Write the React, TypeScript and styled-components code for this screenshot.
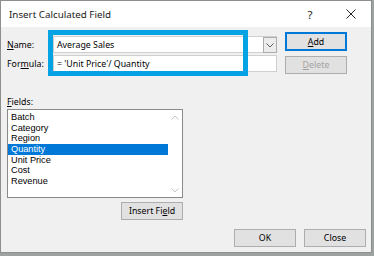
import React from "react";
import styled, { createGlobalStyle } from "styled-components";

const Global = createGlobalStyle`
  html, body { margin: 0; padding: 0; }
  body {
    background: #9da3a0;
    width: 374px;
    height: 256px;
    overflow: hidden;
    font-family: "Noto Sans", "Open Sans", Arial, sans-serif;
  }
`;

const Dialog = styled.div`
  position: relative;
  box-sizing: border-box;
  width: 372px;
  height: 253px;
  border: 1px solid #8e8e8e;
  background: #f0f0f0;
  display: flex;
  flex-direction: column;
  font-size: 8.8px;
  color: #000;
`;

const TitleBar = styled.div`
  height: 26px;
  background: #fff;
  display: flex;
  align-items: center;
  padding-left: 8px;
`;

const Title = styled.div`
  flex: 1;
  font-size: 9.8px;
  color: #1a1a1a;
`;

const HelpGlyph = styled.div`
  width: 14px;
  text-align: center;
  font-size: 11.5px;
  margin-right: 29px;
  color: #222;
`;

const CloseGlyph = styled.svg`
  width: 10px;
  height: 10px;
  margin-right: 15px;
`;

const Body = styled.div`
  flex: 1;
  display: flex;
  flex-direction: column;
  padding: 0 5px 0 6px;
`;

const TopRow = styled.div`
  display: flex;
  align-items: flex-start;
  gap: 8px;
  height: 48px;
`;

const FormCol = styled.div`
  width: 270px;
  margin-top: 9px;
  display: flex;
  flex-direction: column;
  gap: 2px;
`;

const FieldRow = styled.div`
  display: flex;
  align-items: center;
  height: 17px;
`;

const Label = styled.div`
  width: 46px;
  flex: none;
`;

const InputBox = styled.div<{ $combo?: boolean }>`
  box-sizing: border-box;
  width: 224px;
  height: 17px;
  background: #fff;
  border: 1px solid #cfcfcf;
  display: flex;
  align-items: center;
  padding-left: 3px;
  white-space: pre;
  ${(p) => (p.$combo ? "border-right: none;" : "")}
`;

const InputText = styled.span`
  flex: 1;
`;

const DropButton = styled.div`
  box-sizing: border-box;
  width: 14px;
  height: 16px;
  margin-top: 1px;
  border: 1px solid #acacac;
  background: #ececec;
  display: flex;
  align-items: center;
  justify-content: center;
`;

const ButtonCol = styled.div`
  margin-top: 5px;
  display: flex;
  flex-direction: column;
  gap: 5px;
`;

const Button = styled.div<{ $focused?: boolean; $disabled?: boolean }>`
  box-sizing: border-box;
  width: 62px;
  height: ${(p) => (p.$focused ? 19 : 18)}px;
  border: ${(p) => (p.$focused ? "2px solid #0078d7" : "1px solid #adadad")};
  background: #e1e1e1;
  display: flex;
  align-items: center;
  justify-content: center;
  font-size: 8.8px;
  color: ${(p) => (p.$disabled ? "#a3a3a3" : "#000")};
`;

const U = styled.span`
  text-decoration: underline;
  text-underline-offset: 1px;
`;

const FieldsLabel = styled.div`
  margin-top: 21px;
  height: 12px;
  line-height: 12px;
`;

const ListBox = styled.div`
  box-sizing: border-box;
  margin-top: 1px;
  width: 176px;
  height: 89px;
  border: 1px solid #8a8a8a;
  background: #fff;
  display: flex;
`;

const ListItems = styled.div`
  flex: 1;
  padding-top: 2px;
`;

const ListItem = styled.div<{ $selected?: boolean }>`
  height: 10.67px;
  line-height: 10.67px;
  padding-left: 3px;
  font-family: "Liberation Sans", Arial, sans-serif;
  font-size: 9.2px;
  background: ${(p) => (p.$selected ? "#0078d7" : "transparent")};
  color: ${(p) => (p.$selected ? "#fff" : "#000")};
`;

const ScrollBar = styled.div`
  width: 14px;
  display: flex;
  flex-direction: column;
  justify-content: space-between;
  align-items: center;
  padding: 5px 0 4px;
`;

const InsertRow = styled.div`
  width: 176px;
  display: flex;
  justify-content: flex-end;
  margin-top: 4px;
`;

const Footer = styled.div`
  display: flex;
  justify-content: flex-end;
  gap: 8px;
  margin-top: 9px;
`;

const Highlight = styled.div`
  position: absolute;
  left: 47px;
  top: 29px;
  width: 200px;
  height: 46px;
  box-sizing: border-box;
  border: 5px solid #05a3e4;
  pointer-events: none;
`;

const Chevron = ({ up, color = "#c4c4c4" }: { up?: boolean; color?: string }) => (
  <svg width="8" height="5" viewBox="0 0 8 5">
    <path
      d={up ? "M0.5 4.5 L4 1 L7.5 4.5" : "M0.5 0.5 L4 4 L7.5 0.5"}
      fill="none"
      stroke={color}
      strokeWidth="1"
    />
  </svg>
);

const fields = ["Batch", "Category", "Region", "Quantity", "Unit Price", "Cost", "Revenue"];

export default function App() {
  return (
    <>
      <Global />
      <Dialog>
        <TitleBar>
          <Title>Insert Calculated Field</Title>
          <HelpGlyph>?</HelpGlyph>
          <CloseGlyph viewBox="0 0 10 10">
            <path d="M0.5 0.5 L9.5 9.5 M9.5 0.5 L0.5 9.5" stroke="#222" strokeWidth="1" />
          </CloseGlyph>
        </TitleBar>
        <Body>
          <TopRow>
            <FormCol>
              <FieldRow>
                <Label>
                  <U>N</U>ame:
                </Label>
                <InputBox $combo>
                  <InputText>Average Sales</InputText>
                  <DropButton>
                    <Chevron color="#606060" />
                  </DropButton>
                </InputBox>
              </FieldRow>
              <FieldRow>
                <Label>
                  For<U>m</U>ula:
                </Label>
                <InputBox>
                  <InputText>= 'Unit Price'/ Quantity</InputText>
                </InputBox>
              </FieldRow>
            </FormCol>
            <ButtonCol>
              <Button $focused>
                <span>
                  <U>A</U>dd
                </span>
              </Button>
              <Button $disabled>
                <span>
                  <U>D</U>elete
                </span>
              </Button>
            </ButtonCol>
          </TopRow>
          <FieldsLabel>
            <U>F</U>ields:
          </FieldsLabel>
          <ListBox>
            <ListItems>
              {fields.map((f) => (
                <ListItem key={f} $selected={f === "Quantity"}>
                  {f}
                </ListItem>
              ))}
            </ListItems>
            <ScrollBar>
              <Chevron up />
              <Chevron />
            </ScrollBar>
          </ListBox>
          <InsertRow>
            <Button>
              <span>
                Insert Fi<U>e</U>ld
              </span>
            </Button>
          </InsertRow>
          <Footer>
            <Button>OK</Button>
            <Button>Close</Button>
          </Footer>
        </Body>
        <Highlight />
      </Dialog>
    </>
  );
}
